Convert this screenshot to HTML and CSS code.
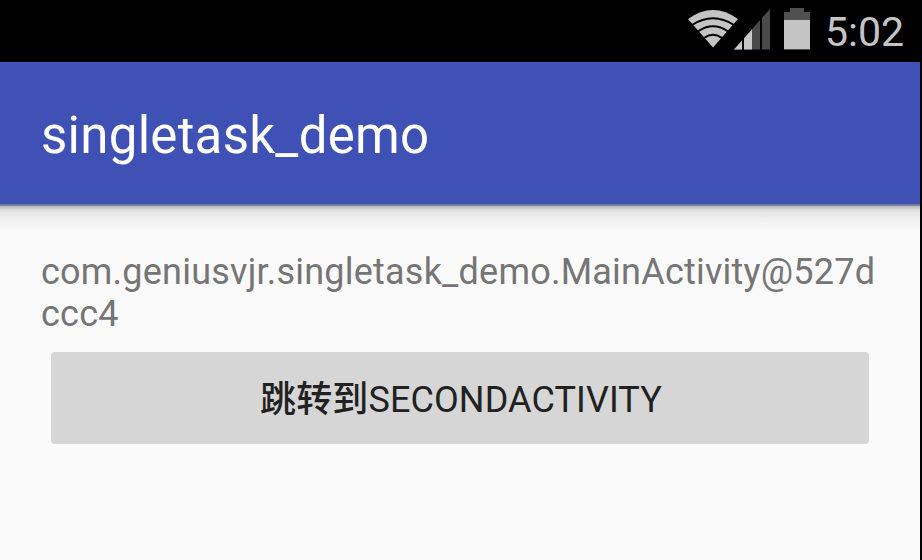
FILE: index.html
```html
<!DOCTYPE html>
<html lang="zh">
<head>
<meta charset="utf-8">
<title>singletask_demo</title>
<link rel="stylesheet" href="styles.css">
</head>
<body>
<div class="screen">
  <header class="status-bar">
    <svg class="status-icons" width="124" height="44" viewBox="687 8 124 44" aria-hidden="true">
      <path d="M688 19 Q713 1 738 19 L713 47.500Z" fill="#c4c4c4"/>
      <path d="M692 25 Q713 11.500 734 25M698 31.500 Q713 21 728 31.500M704 38 Q713 31.500 722 38" fill="none" stroke="#000" stroke-width="2"/>
      <path d="M770 9V49.500H734Z" fill="#4a4a4a"/>
      <path d="M752 29.500V49.500H734Z" fill="#c8c8c8"/>
      <path d="M743 10V50M761 10V50" stroke="#000" stroke-width="2"/>
      <path d="M784 12H790V8H804V12H810V50H784Z" fill="#505050"/>
      <path d="M784 20H810V49H784Z" fill="#c4c4c4"/>
    </svg>
    <time class="clock">5:02</time>
  </header>
  <div class="app-bar"><h1 class="title">singletask_demo</h1></div>
  <main class="content">
    <p class="activity">com.geniusvjr.singletask_demo.MainActivity@527d<br>ccc4</p>
    <button class="launch"><span class="launch-text"><span class="launch-verb">跳转到</span>SECONDACTIVITY</span></button>
  </main>
</div>
</body>
</html>
```

FILE: styles.css
```css
* { box-sizing: border-box; }
body { margin: 0; background: #fafafa; font-family: Roboto, "Noto Sans CJK SC", sans-serif; }
.screen { width: 922px; height: 560px; overflow: hidden; border-right: 2px solid #000; }
.status-bar { height: 62px; background: #000; display: flex; justify-content: flex-end; align-items: flex-start; gap: 14px; padding: 8px 16px 0 0; }
.clock { color: #c4c4c4; font-size: 41px; line-height: 48px; white-space: nowrap; }
.app-bar { height: 142px; background: #3f51b5; display: flex; align-items: center; padding: 5px 41px 0; }
.title { margin: 0; font-size: 51px; font-weight: 400; letter-spacing: .28px; color: #fff; white-space: nowrap; }
.content { padding: 47px 41px 0; background: linear-gradient(#6a74a4 0, #7c80a0 2px, #b8b8b8 2px, #c8c8c8 4px, #dedede 6px, #e8e8e8 9px, #f1f1f1 16px, #fafafa 27px); }
.activity { margin: 0; font-size: 36px; line-height: 42px; letter-spacing: .22px; color: #757575; white-space: nowrap; }
.launch { display: flex; align-items: center; justify-content: center; width: 818px; height: 92px; margin: 17px 0 0 10px; padding: 0 0 4px 2px; border: 0; border-radius: 4px; background: #d6d6d6; color: #212121; font: inherit; font-size: 36px; letter-spacing: .1px; }
.launch-verb { font-weight: 500; }
```
